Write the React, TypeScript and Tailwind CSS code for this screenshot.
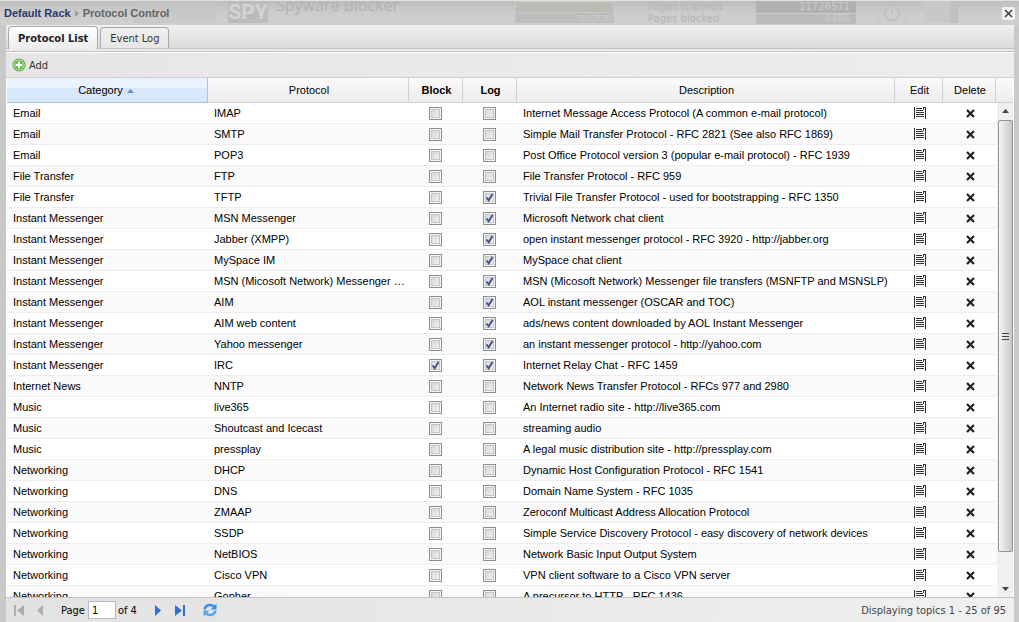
import { useState } from "react";

interface Protocol {
  category: string;
  name: string;
  description: string;
  block?: boolean;
  log?: boolean;
}

const PROTOCOLS: Protocol[] = [
  { category: "Email", name: "IMAP", description: "Internet Message Access Protocol (A common e-mail protocol)" },
  { category: "Email", name: "SMTP", description: "Simple Mail Transfer Protocol - RFC 2821 (See also RFC 1869)" },
  { category: "Email", name: "POP3", description: "Post Office Protocol version 3 (popular e-mail protocol) - RFC 1939" },
  { category: "File Transfer", name: "FTP", description: "File Transfer Protocol - RFC 959" },
  { category: "File Transfer", name: "TFTP", description: "Trivial File Transfer Protocol - used for bootstrapping - RFC 1350", log: true },
  { category: "Instant Messenger", name: "MSN Messenger", description: "Microsoft Network chat client", log: true },
  { category: "Instant Messenger", name: "Jabber (XMPP)", description: "open instant messenger protocol - RFC 3920 - http://jabber.org", log: true },
  { category: "Instant Messenger", name: "MySpace IM", description: "MySpace chat client", log: true },
  { category: "Instant Messenger", name: "MSN (Micosoft Network) Messenger File Transfer", description: "MSN (Micosoft Network) Messenger file transfers (MSNFTP and MSNSLP)", log: true },
  { category: "Instant Messenger", name: "AIM", description: "AOL instant messenger (OSCAR and TOC)", log: true },
  { category: "Instant Messenger", name: "AIM web content", description: "ads/news content downloaded by AOL Instant Messenger", log: true },
  { category: "Instant Messenger", name: "Yahoo messenger", description: "an instant messenger protocol - http://yahoo.com", log: true },
  { category: "Instant Messenger", name: "IRC", description: "Internet Relay Chat - RFC 1459", block: true, log: true },
  { category: "Internet News", name: "NNTP", description: "Network News Transfer Protocol - RFCs 977 and 2980" },
  { category: "Music", name: "live365", description: "An Internet radio site - http://live365.com" },
  { category: "Music", name: "Shoutcast and Icecast", description: "streaming audio" },
  { category: "Music", name: "pressplay", description: "A legal music distribution site - http://pressplay.com" },
  { category: "Networking", name: "DHCP", description: "Dynamic Host Configuration Protocol - RFC 1541" },
  { category: "Networking", name: "DNS", description: "Domain Name System - RFC 1035" },
  { category: "Networking", name: "ZMAAP", description: "Zeroconf Multicast Address Allocation Protocol" },
  { category: "Networking", name: "SSDP", description: "Simple Service Discovery Protocol - easy discovery of network devices" },
  { category: "Networking", name: "NetBIOS", description: "Network Basic Input Output System" },
  { category: "Networking", name: "Cisco VPN", description: "VPN client software to a Cisco VPN server" },
  { category: "Networking", name: "Gopher", description: "A precursor to HTTP - RFC 1436" },
];

export default function App() {
  const [tab, setTab] = useState<"list" | "log">("list");

  return (
    <div className="flex h-screen flex-col overflow-hidden bg-[#c9c9c9] font-['Liberation_Sans',Arial,sans-serif] text-[11px] leading-4 text-black">
      <TitleBar />

      <main className="mr-[5px] ml-1.5 flex min-h-0 flex-1 flex-col bg-[#e8e8e8]">
        {/* Tabs */}
        <div
          role="tablist"
          className="flex h-6 shrink-0 items-end gap-0.5 border-b border-[#c4c4c4] bg-linear-to-b from-[#f0f0f0] to-[#dcdcdc] px-0.5 font-['DejaVu_Sans_Condensed','DejaVu_Sans',sans-serif]"
        >
          <Tab label="Protocol List" active={tab === "list"} onClick={() => setTab("list")} />
          <Tab label="Event Log" active={tab === "log"} onClick={() => setTab("log")} />
        </div>
        <div className="h-[3px] shrink-0 border-b border-[#c4c4c4] bg-[#ebebeb]" />

        {/* Toolbar */}
        <div className="flex h-[26px] shrink-0 items-center border-t border-b border-t-white border-b-[#cfcfcf] bg-linear-to-r from-[#e6e6e6] to-[#ededed] px-1.5 font-['DejaVu_Sans_Condensed','DejaVu_Sans',sans-serif]">
          <button className="flex items-center gap-[3px] text-[#333]">
            <AddIcon />
            <span className="pt-0.5">Add</span>
          </button>
        </div>

        <ProtocolTable />
        <Pager />
      </main>
    </div>
  );
}

function TitleBar() {
  return (
    <header className="relative flex h-[25px] shrink-0 items-center justify-between overflow-hidden border-t border-[#e2e2e2] bg-linear-to-b from-[#bebebe] via-[#cccccc] to-[#cfcfcf] px-1">
      <RackBackdrop />
      <nav className="relative flex items-center gap-1 leading-4 font-bold">
        <a href="#rack" className="text-[#28386c]">
          Default Rack
        </a>
        <svg className="h-[7px] w-1" viewBox="0 0 4 7">
          <path d="M0 0L4 3.5L0 7z" fill="#999" />
        </svg>
        <span className="text-[#636363]">Protocol Control</span>
      </nav>
      <button
        aria-label="Close"
        className="relative flex h-[13px] w-[13px] items-center justify-center rounded-xs bg-[#f2f2f2]"
      >
        <svg className="h-[9px] w-[9px]" viewBox="0 0 9 9">
          <path d="M1 1L8 8M8 1L1 8" stroke="#333" strokeWidth="1.4" />
        </svg>
      </button>
    </header>
  );
}

// Dimmed rack modules that show through behind the title
function RackBackdrop() {
  return (
    <div aria-hidden="true" className="absolute inset-0 flex items-start pl-[134px] leading-4">
      <div className="h-[22px] w-[82px] border-l border-[#c0c0c0] bg-[#c6c6c6]/60" />
      <div className="ml-3 flex h-[22px] w-10 items-center justify-center bg-[#bcbcbc] font-['Roboto',sans-serif] text-[21px] font-bold text-[#d4d4d4]">
        SPY
      </div>
      <div className="-mt-1 ml-2 w-[239px] font-['Open_Sans',sans-serif] text-base leading-4 text-[#b2b2b2]">
        Spyware Blocker
      </div>
      <div className="flex w-[99px] flex-col">
        <div className="h-3 border border-[#c8c8c8] bg-[#b9bdb6]" />
        <div className="h-2.5 bg-[#bebebe] pr-1 text-right text-[9px] leading-[10px] text-[#cdcdcd]">BLOCK</div>
      </div>
      <div className="ml-[34px] w-[108px] font-['DejaVu_Sans',sans-serif] text-[10px] leading-3 text-[#b4b4b4]">
        Pages scanned
        <br />
        Pages blocked
      </div>
      <div className="flex w-[100px] flex-col gap-px text-right font-['DejaVu_Sans',sans-serif] text-[10px] text-[#cacaca]">
        <div className="h-3 bg-[#b1b1b1] pr-1.5 leading-3">11726571</div>
        <div className="h-2.5 bg-[#bbbbbb] pr-1.5 leading-[10px]">6496</div>
      </div>
      <svg className="ml-5 h-6 w-8" viewBox="0 0 32 24" fill="none" stroke="#c0c0c0">
        <circle cx="16" cy="13" r="15" stroke="#c4c4c4" />
        <path d="M12 7a7 7 0 1 0 8 0M16 4v9" strokeWidth="2" />
      </svg>
      <div className="ml-4 h-[22px] w-[34px] border-r-8 border-[#c0c0c0] bg-[#c8c8c8]" />
    </div>
  );
}

function Tab({ label, active, onClick }: { label: string; active: boolean; onClick: () => void }) {
  return (
    <button
      role="tab"
      aria-selected={active}
      onClick={onClick}
      className={`rounded-t-sm border border-b-0 border-[#a8a8a8] px-[9px] pt-0.5 ${
        active
          ? "-mb-px h-[23px] bg-linear-to-b from-white to-[#ececec] font-bold text-[#222]"
          : "h-[21px] bg-linear-to-b from-[#f0f0f0] to-[#e6e6e6] text-[#333]"
      }`}
    >
      {label}
    </button>
  );
}

function ProtocolTable() {
  const th =
    "border-r border-b border-[#d0d0d0] bg-linear-to-b from-[#fafafa] to-[#ededed] py-0 pr-0 pl-0.5 text-center font-normal";

  return (
    <div className="relative min-h-0 flex-1 overflow-hidden bg-white pr-px pl-px">
      <table className="w-full table-fixed border-separate border-spacing-0">
        <colgroup>
          <col className="w-[201px]" />
          <col className="w-[201px]" />
          <col className="w-[54px]" />
          <col className="w-[54px]" />
          <col />
          <col className="w-12" />
          <col className="w-[53px]" />
          <col className="w-[17px]" />
        </colgroup>
        <thead>
          <tr className="h-[25px]">
            <th
              aria-sort="ascending"
              className="border-r border-b border-[#a3c4e6] bg-linear-to-b from-[#eaf3fd] from-40% to-[#d7e8fa] to-40% py-0 pr-0.5 pl-0 text-center font-normal"
            >
              Category
              <svg className="ml-1 inline h-1 w-[7px]" viewBox="0 0 7 4">
                <path d="M0 4L3.5 0L7 4z" fill="#6a8fc0" />
              </svg>
            </th>
            <th className={th}>Protocol</th>
            <th className={th}>
              <b>Block</b>
            </th>
            <th className={th}>
              <b>Log</b>
            </th>
            <th className={th}>Description</th>
            <th className={th}>Edit</th>
            <th className={th}>Delete</th>
            <td className="border-b border-[#d0d0d0] bg-linear-to-b from-[#fafafa] to-[#ededed] p-0" />
          </tr>
        </thead>
        <tbody>
          {PROTOCOLS.map((p) => (
            <ProtocolRow key={p.name} protocol={p} />
          ))}
        </tbody>
      </table>
      <ScrollBar />
    </div>
  );
}

function ProtocolRow({ protocol }: { protocol: Protocol }) {
  const td = "border-b border-[#ededed] py-0";

  return (
    <tr className="h-[21px] even:bg-[#fafafa]">
      <td className={`${td} truncate pr-0 pl-1.5`}>{protocol.category}</td>
      <td className={`${td} truncate pr-0 pl-1.5`}>{protocol.name}</td>
      <td className={`${td} pr-0.5 pl-0`}>
        <CheckBox label={`Block ${protocol.name}`} checked={protocol.block} />
      </td>
      <td className={`${td} pr-0.5 pl-0`}>
        <CheckBox label={`Log ${protocol.name}`} checked={protocol.log} />
      </td>
      <td className={`${td} truncate pr-0 pl-1.5`}>{protocol.description}</td>
      <td className={`${td} px-0`}>
        <button aria-label={`Edit ${protocol.name}`} className="mx-auto block pl-0.5">
          <EditIcon />
        </button>
      </td>
      <td className={`${td} px-0`}>
        <button aria-label={`Delete ${protocol.name}`} className="mx-auto block pl-0.5">
          <svg className="h-[9px] w-[9px]" viewBox="0 0 9 9">
            <path d="M1 1L8 8M8 1L1 8" stroke="#222" strokeWidth="2.2" />
          </svg>
        </button>
      </td>
      <td className="p-0" />
    </tr>
  );
}

function CheckBox({ label, checked = false }: { label: string; checked?: boolean }) {
  const [on, setOn] = useState(checked);

  return (
    <span className="mx-auto grid h-[13px] w-[13px]">
      <input
        type="checkbox"
        aria-label={label}
        checked={on}
        onChange={(e) => setOn(e.target.checked)}
        className="col-start-1 row-start-1 h-[13px] w-[13px] appearance-none border border-[#8e8f8f] bg-linear-to-br from-[#cfd2d6] to-[#f6f6f6] shadow-[inset_0_0_0_1px_#f4f4f4,inset_0_0_0_2px_#c3c5c8]"
      />
      {on && (
        <svg className="pointer-events-none col-start-1 row-start-1 h-[13px] w-[13px]" viewBox="0 0 13 13" fill="none">
          <path d="M3.5 6.5L5.7 9.3L9.5 3" stroke="#3d4f8f" strokeWidth="1.8" />
        </svg>
      )}
    </span>
  );
}

function ScrollBar() {
  return (
    <div
      aria-hidden="true"
      className="absolute top-[25px] right-px bottom-0 flex w-4 flex-col items-center bg-[#f0f0f0]"
    >
      <svg className="h-[17px] w-[7px] shrink-0" viewBox="0 0 7 17">
        <path d="M0 10L3.5 6L7 10z" fill="#444" />
      </svg>
      <div className="flex h-[432px] w-[15px] shrink items-center justify-center rounded-xs border border-[#949494] bg-linear-to-r from-[#f5f5f5] to-[#c9c9cb]">
        <svg className="h-2 w-[7px]" viewBox="0 0 7 8" shapeRendering="crispEdges">
          <path d="M0 1.5h7M0 4.5h7M0 7.5h7" stroke="#444" />
        </svg>
      </div>
      <svg className="mt-auto h-[17px] w-[7px] shrink-0" viewBox="0 0 7 17">
        <path d="M0 7L3.5 11L7 7z" fill="#444" />
      </svg>
    </div>
  );
}

function Pager() {
  return (
    <footer className="flex h-[25px] shrink-0 items-center justify-between border-t border-[#c4c4c4] bg-linear-to-r from-[#e2e2e2] to-[#f0f0f0] pr-2 pl-2 font-['DejaVu_Sans_Condensed','DejaVu_Sans',sans-serif]">
      <div className="flex items-center">
        <button aria-label="First page" disabled>
          <svg className="h-[11px] w-2.5" viewBox="0 0 10 11">
            <path d="M0 0h2v11H0zM10 0v11L3 5.5z" fill="#aeaeae" />
          </svg>
        </button>
        <button aria-label="Previous page" disabled className="ml-[13px]">
          <svg className="h-[11px] w-1.5" viewBox="0 0 6 11">
            <path d="M6 0v11L0 5.5z" fill="#aeaeae" />
          </svg>
        </button>
        <label htmlFor="page" className="ml-[18px] pt-0.5">
          Page
        </label>
        <input
          id="page"
          defaultValue="1"
          className="mr-0.5 ml-[3px] h-[18px] w-7 border border-[#b5b8c8] bg-white px-[3px]"
        />
        <span className="pt-0.5">of 4</span>
        <button aria-label="Next page" className="ml-[18px]">
          <svg className="h-[11px] w-1.5" viewBox="0 0 6 11">
            <path d="M0 0v11L6 5.5z" fill="#2d6fd6" />
          </svg>
        </button>
        <button aria-label="Last page" className="ml-3.5">
          <svg className="h-[11px] w-2.5" viewBox="0 0 10 11">
            <path d="M8 0h2v11H8zM0 0v11L7 5.5z" fill="#2d6fd6" />
          </svg>
        </button>
        <button aria-label="Refresh" className="ml-[18px]">
          <RefreshIcon />
        </button>
      </div>
      <span className="pt-0.5 text-[#444]">Displaying topics 1 - 25 of 95</span>
    </footer>
  );
}

function AddIcon() {
  return (
    <svg className="h-3.5 w-3.5" viewBox="0 0 14 14">
      <circle cx="7" cy="7" r="6.5" fill="#4f9e3c" />
      <circle cx="7" cy="7" r="5.2" fill="#6fbf57" stroke="#d5ecca" strokeWidth="0.8" />
      <path d="M7 3.7v6.6M3.7 7h6.6" stroke="#fff" strokeWidth="2" />
    </svg>
  );
}

function EditIcon() {
  return (
    <svg className="h-3.5 w-3.5" viewBox="0 0 14 14" fill="none" stroke="#333" shapeRendering="crispEdges">
      <path d="M1.5 1v12M10 1.5h3M12.5 1v12M10.5 1v3" />
      <path d="M3 2.5h6M3 4.5h7M3 6.5h8M3 8.5h8M3 10.5h8" />
    </svg>
  );
}

function RefreshIcon() {
  return (
    <svg className="h-3.5 w-3.5" viewBox="0 0 14 14" fill="none">
      <path d="M1.5 6.5A5.5 5 0 0 1 11 3.6" stroke="#3f8fe0" strokeWidth="2.4" />
      <path d="M13.5 0.5v6H7.5z" fill="#3f8fe0" />
      <path d="M12.5 7.5A5.5 5 0 0 1 3 10.4" stroke="#5aa5ea" strokeWidth="2.4" />
      <path d="M0.5 13.5v-6h6z" fill="#5aa5ea" />
    </svg>
  );
}
